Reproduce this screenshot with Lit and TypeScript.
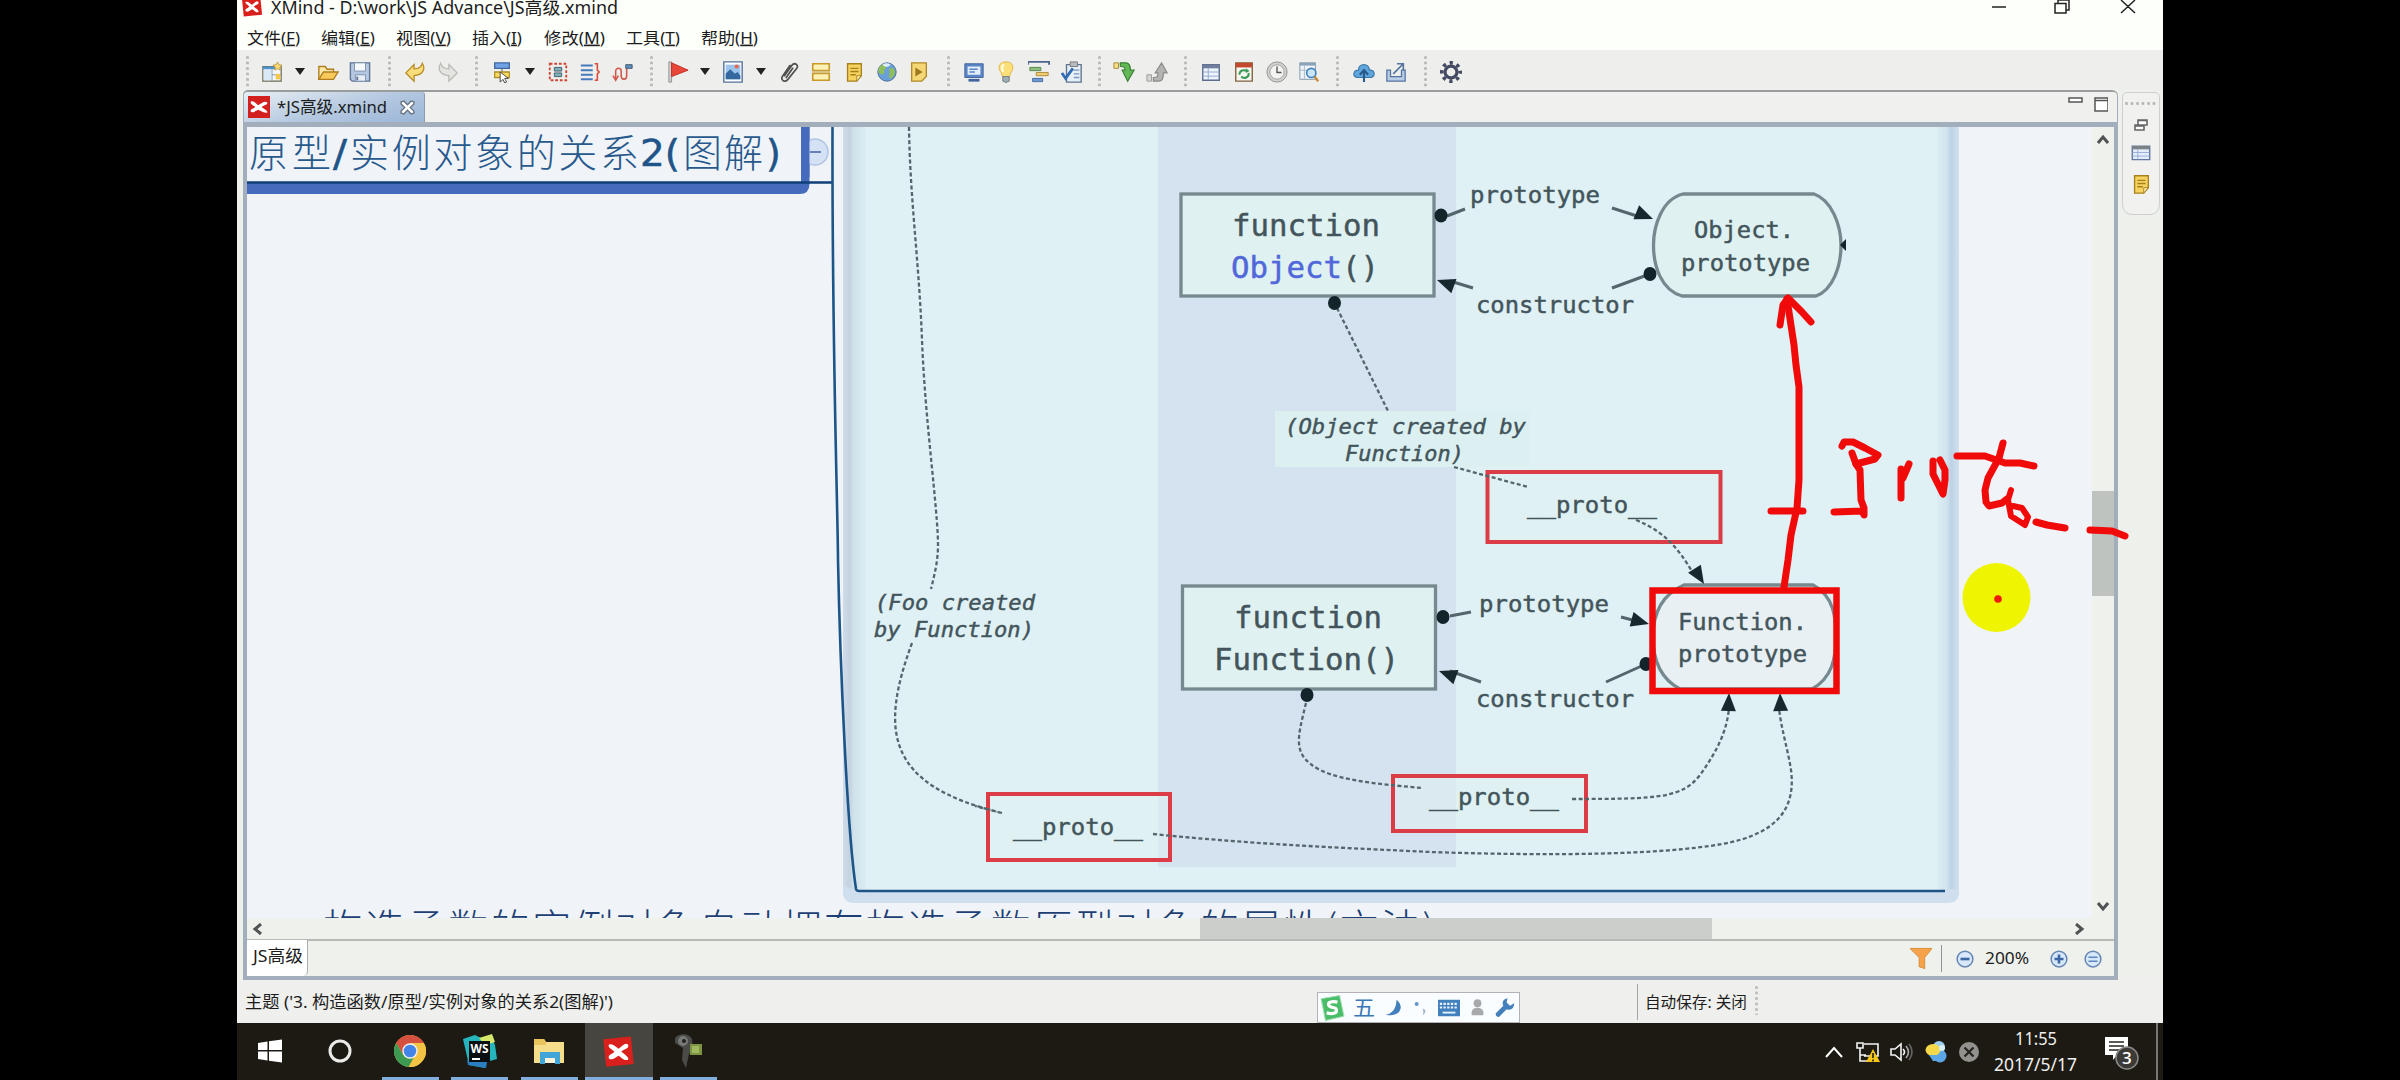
import { LitElement, html, svg, css, TemplateResult } from "lit";
import { customElement } from "lit/decorators.js";

const UI = '"Noto Sans", "Noto Sans CJK SC", sans-serif';

/** One line of text set to an exact width. */
const fit = (text: unknown, width: number, size: number, color = "#1c1c1c") => html`
  <svg width=${width} height=${Math.round(size * 1.5)} style="display:block;overflow:visible;flex:none">
    <text x="0" y=${size * 1.1} font-family=${UI} font-size=${size} fill=${color}
      textLength=${width} lengthAdjust="spacingAndGlyphs">${text}</text>
  </svg>`;

const ic = (body: unknown, w = 24, h = 24) =>
  html`<svg width=${w} height=${h} viewBox="0 0 24 24" fill="none" style="display:block;flex:none">${body}</svg>`;

const xlogo = svg`<path d="M1 3 21 1 23 21 3 23Z" fill="#d9201c"/>
  <path d="M5 7c3-1 4 1 7 3 3-2 5-5 7-3 1 3-3 3-5 5 2 2 6 4 5 6-3 1-5-2-7-3-2 1-5 4-7 2-1-3 3-3 4-5-2-2-5-3-4-5Z" fill="#fff"/>`;
const noteIcon = svg`<path d="M5 3h15v13l-5 6H5Z" fill="#f6d35f" stroke="#a8811f" stroke-width="1.5"/><path d="M8 8h9M8 11.500h9M8 15h6" stroke="#a8811f" stroke-width="1.500"/><path d="M20 16h-5v6Z" fill="#fff0b8" stroke="#a8811f"/>`;
const tableIcon = svg`<path d="M3 4h18v17H3Z" fill="#eef4fc" stroke="#5c6b8c" stroke-width="1.5"/><path d="M3 4h18v4H3Z" fill="#6f7f9d"/><path d="M3 12h18M3 16.500h18M9 8v13" stroke="#8fa6cb"/>`;

const ICONS: Record<string, TemplateResult<2>> = {
  create: svg`<path d="M2 6h20v16H2Z" fill="#f4f8fb" stroke="#6e6a50" stroke-width="1.300"/><path d="M2 6h14v3H2Z" fill="#4d94cf"/><path d="M12 9v13M12 15h10" stroke="#7d95aa"/><path d="M3 10h8v11H3Z" fill="#d9e9f5"/><path d="M16 14h5v6h-5Z" fill="#f5c84c"/><path d="M18 1l1.500 3 3.500.5-2.500 2.500.5 3-3-1.500-3 1.500.5-3L13 4.500 16.500 4Z" fill="#f8d978" stroke="#b08a30" stroke-width=".8"/>`,
  open: svg`<path d="M2 20V6h7l2 3h7v4" fill="#fbe7a6" stroke="#b07d1f" stroke-width="1.500"/><path d="M2 20 7 12h16l-5 8Z" fill="#f8c95b" stroke="#b07d1f" stroke-width="1.500"/>`,
  save: svg`<path d="M1.500 2h21v20h-19l-2-2Z" fill="#b4c8e2" stroke="#607497" stroke-width="1.500"/><path d="M6 2h12v9H6Z" fill="#f7fafc" stroke="#7a8dab"/><path d="M7 15h11v7H7Z" fill="#e8eef6" stroke="#7a8dab"/><path d="M9 17v4" stroke="#607497" stroke-width="2"/>`,
  undo: svg`<path d="M2 13 11 4v4.500c5 0 8-2 9-6 4 7 0 13-9 13.500V22Z" fill="#f9dc7b" stroke="#b88b23" stroke-width="1.400"/>`,
  redo: svg`<path d="M22 13 13 4v4.500c-5 0-8-2-9-6-4 7 0 13 9 13.500V22Z" fill="#e4e4e0" stroke="#b9b9b5" stroke-width="1.400"/>`,
  topic: svg`<path d="M4 2h16v6H4Z" fill="#6fa3e6" stroke="#41679f" stroke-width="1.400"/><path d="M12 8v4" stroke="#555"/><path d="M4 12h16v6H4Z" fill="#fadb62" stroke="#b0902a" stroke-width="1.400"/><path d="M10 12v11l3-3 2 4 2-1-2-4h4Z" fill="#fff" stroke="#444"/>`,
  boundary: svg`<path d="M3 3h18v18H3Z" stroke="#cf4332" stroke-width="2" stroke-dasharray="3 2"/><path d="M8 7h8v4H8ZM8 13h8v4H8Z" fill="#7fb0b8" stroke="#3f5a6e"/>`,
  summary: svg`<path d="M2 5h13M2 10h13M2 15h13M2 20h13" stroke="#4779bd" stroke-width="2.200"/><path d="M17 3h3v7l2 2-2 2v7h-3" stroke="#d8503f" stroke-width="1.800"/>`,
  relation: svg`<path d="M4 20V11c0-4 6-4 6 0v5c0 5 6 5 6 0V8" stroke="#d0584a" stroke-width="1.700"/><path d="m1 16 3 5 3-5" stroke="#d0584a" stroke-width="1.700"/><path d="M15 4h7v4h-7Z" fill="#5c90c4" stroke="#456"/>`,
  flag: svg`<path d="M2 1h3v22H2Z" fill="#cfd2d2" stroke="#8e8e8e"/><path d="M5 2 23 10 5 17Z" fill="#e8483a" stroke="#c2281f"/>`,
  image: svg`<path d="M2 1h20v22H2Z" fill="#fff" stroke="#52719b" stroke-width="1.500"/><path d="M4 4h16v16H4Z" fill="#9cc4ec"/><path d="m4 20 0-6 5-5 5 5 3-2 3 4v4Z" fill="#34699f"/><circle cx="16" cy="6" r="2.300" fill="#e46850"/>`,
  clip: svg`<path d="m7 16 8-11c3-4 8-1 5.500 3L11 20c-3 4-9 1-6-3.500L13 5M9 18l7-10" stroke="#515151" stroke-width="1.900" stroke-linecap="round"/>`,
  label: svg`<path d="M3 3h18v7.500H3ZM3 13.500h18V21H3Z" fill="#fdf0b5" stroke="#c79a2a" stroke-width="1.800"/>`,
  note: noteIcon,
  globe: svg`<circle cx="12" cy="12" r="10" fill="#6a9fd9" stroke="#4a6c94"/><path d="M5 5c5-3 7-1 6 2s-3 2-2 5-3 3-6 1c-1-4 0-6 2-8ZM14 9c4-3 6-1 7 3-1 4-3 7-6 7-2-4 1-5-1-10Z" fill="#8fbf5c"/><path d="M7 4c3-2 6-2 9 0-3 3-6 3-9 0Z" fill="#dbeefa"/>`,
  audio: svg`<path d="M4 2h16v15l-5 5H4Z" fill="#f6d775" stroke="#b08a2b" stroke-width="1.500"/><path d="m8 7 8 5-8 5Z" fill="#a07820"/>`,
  present: svg`<path d="M2 3h20v15H2Z" fill="#5a85c6" stroke="#40639b"/><path d="M5 6h14v9H5Z" fill="#e3eefb"/><path d="M7 9h9M7 12h6" stroke="#5a85c6" stroke-width="1.500"/><path d="M6 21h12" stroke="#40639b" stroke-width="3"/>`,
  bulb: svg`<path d="M12 1c9 0 9 8 5 12l-1 4H8l-1-4C3 9 3 1 12 1Z" fill="#fbe07a" stroke="#e0b23c"/><path d="M10 4c-3 1-3 5-1 8" stroke="#fffbe2" stroke-width="2.500"/><path d="M8.500 17h7v5l-3.500 1.500L8.500 22Z" fill="#9fb0b5" stroke="#6d7c80"/>`,
  gantt: svg`<path d="M0 4V1h23v3" stroke="#4a678f" stroke-width="2"/><path d="M2 7h12v3.500H2Z" fill="#8cc07f" stroke="#56804c"/><path d="M9 12.500h13V16H9Z" fill="#f1cf6e" stroke="#a8873a"/><path d="M5 19h11v3.500H5Z" fill="#6c9ad6" stroke="#46699b"/>`,
  task: svg`<path d="M6 4h16v19H6Z" fill="#e7eff8" stroke="#5f7691" stroke-width="1.500"/><path d="M10 1h8v5h-8Z" fill="#b7bcc0" stroke="#777"/><path d="M14 10h6M14 14h6M14 18h6" stroke="#7898bf" stroke-width="1.500"/><path d="m1 13 4 6 8-11" stroke="#2f6cb4" stroke-width="3"/>`,
  import: svg`<path d="M1 2h5v6H1Z" fill="#f7df84" stroke="#a08839"/><path d="M8 2h6c4 0 5 3 5 8h4l-7 12-6-12h3c0-3 0-4-5-4Z" fill="#64b957" stroke="#3c8135" stroke-width="1.300"/>`,
  export: svg`<path d="M1 15h5v7H1Z" fill="#d6d6d2" stroke="#999"/><path d="M8 22h6c4 0 5-3 5-9h4L17 2l-7 11h3c0 4 0 5-5 5Z" fill="#b4b5b2" stroke="#8a8b88" stroke-width="1.300"/>`,
  table: tableIcon,
  blog: svg`<path d="M3 2h18v20H3Z" fill="#f7f7ef" stroke="#80613e" stroke-width="1.500"/><path d="M3 2h18v5H3Z" fill="#c4482e"/><path d="M7 15c0-5 5-6 8-4M17 13c1 5-5 7-8 4" stroke="#3b9a59" stroke-width="2.200"/><path d="m14 8 4 3-4 2Z" fill="#3b9a59"/>`,
  clock: svg`<circle cx="12" cy="12" r="11" fill="#cfd1cf" stroke="#8f918f"/><circle cx="12" cy="12" r="7.800" fill="#f4f4f0" stroke="#a0a2a0"/><path d="M12 6v6.500h5" stroke="#555" stroke-width="1.500"/>`,
  search: svg`<path d="M2 2h17v18H2Z" fill="#eff4f8" stroke="#8095a8"/><path d="M2 2h17v3H2Z" fill="#8ba3b8"/><path d="M2 10h17M7 5v15" stroke="#a9b9c6"/><circle cx="14.500" cy="13" r="5" fill="#c9e5f7" stroke="#4183bd" stroke-width="1.800"/><path d="m18 17 4 5" stroke="#c58835" stroke-width="2.500"/>`,
  cloud: svg`<path d="M5 18c-6-1-5-8 1-8 0-8 11-8 12 0 6-1 7 7 1 8Z" fill="#5fa6dc" stroke="#3a78ab" stroke-width="1.300"/><path d="M12 23V12M7.500 15 12 10l4.500 5" stroke="#28578a" stroke-width="2.300"/>`,
  share: svg`<path d="M2 10v12h20V10h-4v7H6v-7Z" fill="#b8cde6" stroke="#54749f" stroke-width="1.400"/><path d="m9 14 11-11M13 3h7v7" stroke="#54749f" stroke-width="1.800"/>`,
  gear: svg`<circle cx="12" cy="12" r="6.500" stroke="#454a63" stroke-width="3.500"/><circle cx="12" cy="12" r="10" stroke="#454a63" stroke-width="4" stroke-dasharray="3.600 4.254" stroke-dashoffset="1.800"/>`,
};

const TOOLBAR: string[] = [
  "create", "▾", "open", "save", "|", "undo", "redo", "|", "topic", "▾", "boundary", "summary", "relation", "|",
  "flag", "▾", "image", "▾", "clip", "label", "note", "globe", "audio", "|", "present", "bulb", "gantt", "task", "!",
  "import", "export", "|", "table", "blog", "clock", "search", "|", "cloud", "share", "|", "gear",
];

const MENU: [string, string, number, number][] = [
  ["文件", "F", 53, 74], ["编辑", "E", 54, 75], ["视图", "V", 55, 76], ["插入", "I", 50, 71.5],
  ["修改", "M", 61, 82], ["工具", "T", 54, 75], ["帮助", "H", 57, 75],
];

@customElement("xm-toolbar")
class XmToolbar extends LitElement {
  static styles = css`
    :host { display: flex; height: 40px; align-items: center; background: #eeefec; padding: 3px 0 0 9px; box-sizing: border-box; }
    .cell { width: 32.6px; display: flex; justify-content: center; }
    .drop { width: 23px; display: flex; justify-content: center; }
    .drop i { border: 5.500px solid transparent; border-top: 7px solid #222; border-bottom: 0; }
    .sep { height: 31px; width: 3px; margin: 0 8px 0 11px; background: radial-gradient(circle at 1.500px 1.500px, #b9bbb8 1.300px, transparent 1.600px) 0 0 / 3px 5.500px; }
    .tight { margin: 0 7px 0 10px; }
    .first { margin: 0 7px 0 0; }
  `;
  render() {
    return html`<span class="sep first"></span>${TOOLBAR.map((k) =>
      k === "|" || k === "!"
        ? html`<span class="sep ${k === "!" ? "tight" : ""}"></span>`
        : k === "▾"
          ? html`<span class="drop"><i></i></span>`
          : html`<span class="cell">${ic(ICONS[k], 22, 22)}</span>`)}`;
  }
}

const mono = '"DejaVu Sans Mono", monospace';
const label = (s: unknown, x: number, y: number, w: number, size: number, extra = "", fill = "#43555b") => svg`
  <text class="mono" x=${x} y=${y} font-family=${mono} font-size=${size} fill=${fill} font-style=${extra || "normal"}
    textLength=${w} lengthAdjust="spacingAndGlyphs">${s}</text>`;
const proto = (x: number, y: number, w = 130) => svg`${label("__proto__", x, y, w, 23.5)}`;
const head = (x: number, y: number, angle: number) =>
  svg`<path d="M0 0-18-7.500V7.500Z" fill="#18282f" transform="translate(${x} ${y}) rotate(${angle})"/>`;
const dot = (x: number, y: number) => svg`<ellipse cx=${x} cy=${y} rx="6.500" ry="7" fill="#14242b"/>`;

@customElement("xm-map")
class XmMap extends LitElement {
  static styles = css`
    :host { display: block; width: 1845px; height: 791px; background: #f0f4f8; overflow: hidden; }
    svg { display: block; }
    .cjk { font-family: "Noto Sans CJK SC", sans-serif; font-weight: 300; font-size: 39px; fill: #28598c; }
    .latin { font-family: "DejaVu Sans", sans-serif; font-size: 38px; fill: #205489; stroke: #205489; stroke-width: .5; }
    .next { font-family: "Noto Sans CJK SC", sans-serif; font-weight: 300; font-size: 40px; fill: #1d3f73; }
    .mono { stroke: #43555b; stroke-width: .45; }
    .mono tspan { stroke: #5068da; }
    .dash { fill: none; stroke: #53666c; stroke-width: 2.300; stroke-dasharray: 4 2.500; }
    .line { fill: none; stroke: #53666c; stroke-width: 3; }
    .box { fill: #e0f1f1; stroke: #76898f; stroke-width: 3.300; }
    .red { fill: #e0f2f0; fill-opacity: .5; stroke: #dc3c45; stroke-width: 4; }
  `;
  render() {
    return html`<svg width="1845" height="791" viewBox="247 127 1845 791">
      <defs>
        <linearGradient id="left"><stop offset="0" stop-color="#cfdbe8"/><stop offset=".3" stop-color="#c4d2e0"/><stop offset=".45" stop-color="#cfe1ea"/><stop offset="1" stop-color="#dbeef2"/></linearGradient>
        <linearGradient id="right"><stop offset="0" stop-color="#dbeef3"/><stop offset=".4" stop-color="#d2e5ee"/><stop offset=".65" stop-color="#bed2e6"/><stop offset="1" stop-color="#d3e0ee"/></linearGradient>
        <linearGradient id="foot" x2="0" y2="1"><stop offset="0" stop-color="#bed1e5"/><stop offset="1" stop-color="#d0dfee"/></linearGradient>
      </defs>
      <path d="M801 127h8.500V184q0 10-10 10H247V183H801Z" fill="#466abc"/>
      <path d="M247 182.500H833" stroke="#0f3f78" stroke-width="2.500"/>
      <circle cx="815" cy="152" r="13" fill="#d5e2f6" stroke="#b3c5e3" stroke-width="1.500"/>
      <path d="M801 127h8.500v50H801Z" fill="#466abc"/>
      <path d="M810 152h11" stroke="#6680b5" stroke-width="2"/>
      <text class="cjk" x="249" y="167" textLength="82">原型</text>
      <text class="latin" x="333" y="166" textLength="14" lengthAdjust="spacingAndGlyphs">/</text>
      <text class="cjk" x="350" y="167" textLength="289">实例对象的关系</text>
      <text class="latin" x="640" y="166" textLength="40" lengthAdjust="spacingAndGlyphs">2(</text>
      <text class="cjk" x="683" y="167" textLength="80">图解</text>
      <text class="latin" x="766" y="166">)</text>

      <path d="M843 127H1959V892q0 11-11 11H854q-11 0-11-11Z" fill="url(#foot)"/>
      <path d="M865 127H1940V891H865Z" fill="#dff1f4"/>
      <path d="M843 127h23v763h-12l-11-5Z" fill="url(#left)"/>
      <path d="M1937 127h22v762h-22Z" fill="url(#right)"/>
      <path d="M1158 127h298v740h-298Z" fill="#d5e3f0"/>
      <path d="M832.500 127C832 350 838 520 838 560 840 660 847 830 856 889q.5 2 3 2H1945" fill="none" stroke="#1d5588" stroke-width="2.600"/>

      <g class="dash">
        <path d="M909 127C910 200 919 260 922 340 925 420 938 510 938 545 938 560 935 573 931 589"/>
        <path d="M912 643C880 730 885 785 1002 813"/>
        <path d="M1337 308 1388 411"/>
      </g>
      <path d="M1275 411H1530V467H1275Z" fill="#ddf0f1"/>
      <g class="line">
        <rect class="box" x="1181" y="194" width="253" height="102"/>
        <rect class="box" x="1182.500" y="586" width="253" height="103"/>
        <path d="M1447 216 1465 209M1612 208 1640 217M1473 288 1450 281M1650 274 1612 288"/>
        <path d="M1450 616 1471 612M1621 617 1640 622M1481 682 1450 671M1646 664 1606 682"/>
        <path class="box" d="M1683 194H1814C1832 200 1841 226 1841 245 1841 266 1833 290 1816 296H1682C1661 290 1653.500 266 1653.500 245 1653.500 226 1662 199 1683 194Z"/>
        <path class="box" d="M1684 585H1813C1834 596 1836 618 1836 637 1836 658 1832 678 1812 689H1680C1659 678 1653 658 1653 637 1653 618 1659 596 1684 585Z" style="fill:#e8f0f4"/>
      </g>
      <rect class="red" x="1487.500" y="472" width="233" height="70"/>
      <rect class="red" x="988" y="794" width="182" height="66"/>
      <rect class="red" x="1393" y="776" width="193" height="55"/>
      <g class="dash">
        <path d="M1454 467 1528 487"/>
        <path d="M1002 813 975 806"/>
        <path d="M1636 520C1665 532 1678 548 1693 573"/>
        <path d="M1306 703C1297 740 1292 755 1320 770 1345 782 1390 785 1422 788"/>
        <path d="M1572 799C1660 799 1682 798 1700 775 1718 750 1727 730 1729 708"/>
        <path d="M1153 834C1260 845 1350 848 1430 852 1550 856 1660 855 1722 844 1778 834 1796 808 1791 770 1788 750 1781 728 1779 708"/>
      </g>
      ${head(1653, 219, 22)}${head(1437, 280, 200)}${head(1649, 624, 15)}${head(1439, 671, 200)}
      ${head(1704, 584, 58)}${head(1729, 693, -88)}${head(1780, 693, -92)}
      ${dot(1441, 215.5)}${dot(1650, 274)}${dot(1334.500, 303)}${dot(1443, 617)}${dot(1646, 664)}${dot(1307, 695)}
      <path d="M1846 239v12l-6-6Z" fill="#14242b"/>
      ${label("function", 1232, 236, 148, 29.5)}
      ${label(svg`<tspan fill="#5068da">Object</tspan>()`, 1231, 277.5, 148, 29.5)}
      ${label("function", 1234, 628, 148, 29.5)}
      ${label("Function()", 1214, 669.5, 185, 29.5)}
      ${label("prototype", 1470, 203, 130, 23)}
      ${label("constructor", 1476, 313, 158, 23)}
      ${label("prototype", 1479, 612, 130, 23)}
      ${label("constructor", 1476, 707, 158, 23)}
      ${label("Object.", 1694, 238, 100, 23)}
      ${label("prototype", 1681, 270.5, 129, 23)}
      ${label("Function.", 1678, 630, 129, 23)}
      ${label("prototype", 1678, 662, 129, 23)}
      ${label("(Object created by", 1285, 434, 241, 21.5, "italic")}
      ${label("Function)", 1345, 461, 119, 21.500, "italic")}
      ${label("(Foo created", 875, 610, 160, 21.500, "italic")}
      ${label("by Function)", 874, 637, 160, 21.500, "italic")}
      ${proto(1527, 513)}${proto(1013, 835)}${proto(1429, 804.500)}
      <text class="next" x="323" y="943" textLength="1112">构造函数的实例对象自动拥有构造函数原型对象的属性(方法)</text>
    </svg>`;
  }
}

@customElement("xm-ink")
class XmInk extends LitElement {
  static styles = css`
    :host { position: absolute; left: 0; top: 0; pointer-events: none; }
    .ink { fill: none; stroke: #f00a0a; stroke-width: 7; stroke-linecap: round; stroke-linejoin: round; }
    .frame { fill: none; stroke: #f00a0a; stroke-width: 6.500; }
  `;
  render() {
    return html`<svg width="2400" height="1080" style="display:block">
      <ellipse cx="1996.500" cy="597.500" rx="34" ry="34.500" fill="#eff400"/>
      <circle cx="1998" cy="599" r="3.800" fill="#f01a0a"/>
      <rect class="frame" x="1652.500" y="590.500" width="184" height="100.500"/>
      <g class="ink">
        <path d="M1787 299 1794 345 1796 365 1799 387V480L1797 508 1791 535 1788 560 1784 587"/>
        <path d="M1780 325 1783 305 1788 298 1802 312 1811 322"/>
        <path d="M1771 511H1803"/>
        <path d="M1842 446 1844 442 1853 442 1865 448 1878 455 1875 459 1856 464 1852 453"/>
        <path d="M1856 464 1860 470 1861 500 1864 508 1864 515 1862 511 1834 512"/>
        <path d="M1901 469 1901 498M1909 464 1903 478"/>
        <path d="M1933 461V474L1943 494 1945 480V470L1940 460"/>
        <path d="M1957 456 1985 456 2005 463 2020 463 2034 466"/>
        <path d="M2003 443 1999 458 1988 478 1985 490 1986 502 1989 506 2002 503 2007 499" />
        <path d="M2011 490 2008 500 2011 516 2025 525M2013 506 2022 508 2028 517 2025 525" stroke-width="6"/>
        <path d="M2036 522 2047 525 2065 528M2090 530 2112 531 2125 536"/>
      </g>
    </svg>`;
  }
}

@customElement("app-root")
class AppRoot extends LitElement {
  static styles = css`
    :host { display: block; }
    .screen { position: relative; width: 2400px; height: 1080px; box-sizing: border-box; padding: 0 237px; background: #000; overflow: hidden; }
    .window { width: 1926px; height: 1080px; display: flex; flex-direction: column; background: #eef0ec; overflow: hidden; }
    .title { height: 22px; flex: none; display: flex; background: #fdfffb; padding-left: 3px; }
    .title .logo { margin: -5px 8px 0 1px; }
    .title .name { margin-top: -5px; flex: 1; }
    .menu { height: 28px; flex: none; display: flex; background: #fdfffb; padding: 4px 0 0 10px; box-sizing: border-box; }
    .menu span { flex: none; }
    .main { height: 890px; flex: none; display: flex; padding-left: 6px; }
    .frame { width: 1875px; height: 890px; box-sizing: border-box; border: 0 solid #999d9d; border-top-width: 2px; border-radius: 5px 6px 0 0; background: #a2aebb; display: flex; flex-direction: column; }
    .tabs { height: 30px; margin: 0 1px; background: #f0f1ee; display: flex; border-radius: 4px 4px 0 0; }
    .tab { width: 181px; display: flex; align-items: center; box-sizing: border-box; padding-left: 4px; background: linear-gradient(165deg, #e4ecf3 5%, #b4c8e0 55%, #9bb6d8); border-right: 1px solid #8c9bab; border-radius: 4px 3px 0 0; }
    .tab .x { margin-left: 12px; }
    .tab .nm { margin-left: 7px; }
    .tabs .mm { margin-left: auto; display: flex; gap: 12px; padding: 5px 9px 0 0; }
    .body { margin: 5px 4px 4px; flex: 1; background: #eef1ec; display: flex; flex-direction: column; }
    .row { display: flex; height: 791px; }
    .vscroll { width: 22px; display: flex; flex-direction: column; align-items: center; padding: 7px 0 6px; box-sizing: border-box; }
    .vthumb { width: 22px; height: 105px; background: #bfc3bf; margin-top: 347px; }
    .down { margin-top: auto; }
    .hscroll { height: 23px; display: flex; align-items: center; padding: 0 29px 0 5px; border-bottom: 2px solid #b6bab7; box-sizing: border-box; }
    .hthumb { width: 512px; height: 21px; background: #cbcecb; margin-left: 938px; }
    .right { margin-left: auto; }
    .sheets { flex: 1; display: flex; align-items: center; }
    .sheet { width: 61px; height: 36px; margin-top: -2px; background: #fff; border-right: 1.500px solid #aaafad; border-radius: 0 0 5px 0; box-sizing: border-box; padding: 4px 0 0 6px; }
    .zoom { margin-left: auto; display: flex; align-items: center; padding-right: 12px; }
    .bar { width: 1.500px; height: 27px; background: #8d9294; margin: 0 14px 0 9px; }
    .pct { margin: 0 21px 0 11px; }
    .eq { margin-left: 16px; }
    .side { width: 38px; height: 123px; box-sizing: border-box; margin: 2px 0 0 4px; border: 1.500px solid #cdd0cc; border-radius: 5px 5px 10px 10px; background: #f1f2ef; display: flex; flex-direction: column; align-items: center; gap: 11px; }
    .dots { width: 32px; height: 3px; margin: 9px 0 0; background: radial-gradient(circle at 1.500px 1.500px, #b6b9b6 1.300px, transparent 1.600px) 0 0 / 5.500px 3px; }
    .status { height: 43px; flex: none; display: flex; padding: 0 0 0 8px; background: #eff0ed; }
    .status .left { width: 1071.500px; padding-top: 10px; box-sizing: border-box; }
    .ime { width: 203px; height: 31px; box-sizing: border-box; margin-top: 12px; border: 1.500px solid #b3b0b8; background: #fafdff; display: flex; align-items: center; justify-content: space-between; padding: 0 4px 0 1px; }
    .auto { margin: 4px 0 0 117px; height: 36px; border-left: 1.500px solid #a1a5a4; padding: 7px 0 0 7px; box-sizing: border-box; display: flex; gap: 8px; }
    .auto i { width: 3px; height: 29px; margin-top: -5px; background: radial-gradient(circle at 1.500px 1.500px, #bbbebb 1.300px, transparent 1.600px) 0 0 / 3px 5.500px; }
    .task { height: 57px; flex: none; display: flex; background: #1d1a14; color: #fff; }
    .app { width: 68px; height: 57px; display: flex; align-items: center; justify-content: center; box-sizing: border-box; margin-right: 1.600px; padding: 0 0 1px; }
    .start { margin-left: -1px; }
    .gap { margin-left: 1px; }
    .run { background: linear-gradient(#82aedd, #82aedd) 50% 100% / 57px 3px no-repeat; }
    .on { background: linear-gradient(#82aedd, #82aedd) 0 100% / 68px 3px no-repeat, #46453f; }
    .tray { margin-left: auto; display: flex; align-items: center; }
    .tray > * { flex: none; }
    .clock { width: 83px; display: flex; flex-direction: column; align-items: center; gap: 0; margin: 0 26px 0 15px; }
    .peek { width: 2px; height: 57px; background: #77756f; margin: 0 5px 0 17px; }
  `;

  render() {
    const ring = (inner: unknown) => ic(svg`<circle cx="12" cy="12" r="10.500" fill="#d6e8f9" stroke="#6886b4" stroke-width="2"/>${inner}`, 18, 18);
    return html`<div class="screen">
      <div class="window">
        <div class="title">
          <div class="logo">${ic(xlogo, 22, 23)}</div>
          <div class="name">${fit("XMind - D:\\work\\JS Advance\\JS高级.xmind", 347, 17.500)}</div>
          <svg width="150" height="20" style="display:block;margin-right:22px;overflow:visible" fill="none" stroke="#222" stroke-width="1.500">
            <path d="M1 7h14M64 3.500h11v9.500H64ZM67 3V0h11v10h-3M130 0l14 13M144 0 130 13"/>
          </svg>
        </div>
        <div class="menu">${MENU.map(([t, k, w, cell]) =>
          html`<span style="width:${cell}px">${fit(svg`${t}(<tspan text-decoration="underline">${k}</tspan>)`, w, 16)}</span>`)}</div>
        <xm-toolbar></xm-toolbar>
        <div class="main">
          <div class="frame">
            <div class="tabs">
              <div class="tab">${ic(svg`<path d="M0 0h24v24H0Z" fill="#d3201f"/><path d="M3 6c4-1 5 2 8 4 4-2 7-5 10-3 1 3-4 3-6 5 2 2 7 4 6 6-4 1-7-2-10-3-2 1-6 4-8 2-1-3 3-3 5-5-3-2-6-4-5-6Z" fill="#fff"/>`, 22, 22)}
                <span class="nm">${fit("*JS高级.xmind", 110, 17)}</span>
                <span class="x">${ic(svg`<path d="m3 4 4-1 5 5 5-5 4 1v3l-5 5 5 5v3l-4 1-5-5-5 5-4-1v-3l5-5-5-5Z" fill="#fff" stroke="#6b7784" stroke-width="2"/>`, 17, 17)}</span></div>
              <div class="mm"><svg width="40" height="18" fill="#fff" stroke="#555" stroke-width="1.500"><path d="M1 1h13v4H1ZM27 1h13v13H27ZM27 3.500h13"/></svg></div>
            </div>
            <div class="body">
              <div class="row"><xm-map></xm-map>
                <div class="vscroll">
                  <svg width="12" height="10" fill="none" stroke="#4f5353" stroke-width="3"><path d="m1 9 5-6 5 6"/></svg>
                  <div class="vthumb"></div>
                  <svg class="down" width="12" height="10" fill="none" stroke="#4f5353" stroke-width="3"><path d="m1 1 5 6 5-6"/></svg>
                </div></div>
              <div class="hscroll">
                <svg width="10" height="12" fill="none" stroke="#4f5353" stroke-width="3"><path d="M9 1 3 6l6 5"/></svg>
                <div class="hthumb"></div>
                <svg class="right" width="10" height="12" fill="none" stroke="#4f5353" stroke-width="3"><path d="m1 1 6 5-6 5"/></svg>
              </div>
              <div class="sheets">
                <div class="sheet">${fit("JS高级", 50, 16.500)}</div>
                <div class="zoom">
                  ${ic(svg`<path d="M0 1h24l-8 10v12l-6-2V11Z" fill="#f5a24b" stroke="#d88a35"/>`, 22, 23)}
                  <span class="bar"></span>
                  ${ring(svg`<path d="M6 12h12" stroke="#3c67a4" stroke-width="3.500"/>`)}
                  <span class="pct">${fit("200%", 44, 16.500)}</span>
                  ${ring(svg`<path d="M6 12h12M12 6v12" stroke="#3c67a4" stroke-width="3.500"/>`)}
                  <span class="eq">${ring(svg`<path d="M6 9.500h12M6 15h12" stroke="#5b86bd" stroke-width="2"/>`)}</span>
                </div>
              </div>
            </div>
          </div>
          <div class="side">
            <span class="dots"></span>
            <svg width="14" height="14" style="margin-top:2px" fill="#fff" stroke="#666" stroke-width="1.600"><path d="M4 2h9v5H4ZM1 7h9v5H1ZM1 8h9M4 2.500h9"/></svg>
            ${ic(svg`<path d="M1 4h22v17H1Z" fill="#e4eefb" stroke="#66779c" stroke-width="1.800"/><path d="M1 4h22v4H1Z" fill="#7c8285"/><path d="M1 12h22M1 16.500h22M8 8v13" stroke="#8aa3d0"/>`, 20, 19)}
            ${ic(noteIcon, 22, 22)}
          </div>
        </div>
        <div class="status">
          <div class="left">${fit("主题 ('3. 构造函数/原型/实例对象的关系2(图解)')", 368, 16.500)}</div>
          <div class="ime">
            ${ic(svg`<path d="m2 4 17-3 4 19-17 4Z" fill="#49bd68" stroke="#9fdcae"/><path d="M17 7c-5-1-9 0-8 3s8 1 7 5c0 3-5 3-9 2" stroke="#fff" stroke-width="3"/>`, 26, 27)}
            ${fit("五", 22, 21, "#3b78b5")}
            ${ic(svg`<path d="M15 2c11 9 3 22-13 18 8-1 13-8 13-18Z" fill="#4180bd"/>`, 20, 22)}
            ${ic(svg`<circle cx="7" cy="6" r="3" fill="#6397ca"/><path d="M16 13c6 1 5 6 0 10 2-4 1-6 0-10Z" fill="#9eb4c8"/>`, 16, 18)}
            ${ic(svg`<path d="M0 3h24v18H0Z" fill="#4180bd"/><path d="M2 7.500h20M2 11.500h20" stroke="#e7f3ff" stroke-width="2.200" stroke-dasharray="2.500 1.500"/><path d="M5 17h14" stroke="#e7f3ff" stroke-width="2"/>`, 24, 22)}
            ${ic(svg`<circle cx="12" cy="6" r="5.500" fill="#a7a9aa"/><path d="M4 23c-4-14 20-14 16 0Z" fill="#a7a9aa"/>`, 17, 19)}
            ${ic(svg`<path d="M15 1c-5 1-7 5-5 9L1 19c-1 3 2 5 4 4l9-9c5 2 9-1 9-7l-5 3-4-4Z" fill="#4480bb"/>`, 20, 21)}
          </div>
          <div class="auto">${fit("自动保存: 关闭", 102, 15.500)}<i></i></div>
        </div>
        <div class="task">
          <div class="app start">${ic(svg`<path d="M0 4 9.500 2.500V11H0ZM11 2.300 24 .5V11H11ZM0 12.500h9.500V21.500L0 20ZM11 12.500H24V23.500L11 21.700Z" fill="#fff"/>`, 24, 24)}</div>
          <div class="app">${ic(svg`<circle cx="12" cy="12" r="10" stroke="#ecebe8" stroke-width="3"/>`, 24, 24)}</div>
          <div class="app run gap">${ic(svg`<circle cx="12" cy="12" r="12" fill="#e1bd3e"/><path d="M1.600 6A12 12 0 0 1 22.400 6H12L7 15Z" fill="#d5503f"/><path d="M1.600 6A12 12 0 0 0 11 24l5-9H7Z" fill="#3d9a52"/><path d="M22.400 6H12l4 9-5 9A12 12 0 0 0 22.400 6Z" fill="#f3c443"/><circle cx="12" cy="12" r="5.800" fill="#f4f0e8"/><circle cx="12" cy="12" r="4.700" fill="#4384e8"/>`, 32, 32)}</div>
          <div class="app run"><svg width="35" height="35" viewBox="0 0 35 35"><path d="m1 5 12-4 6 3 10-3 4 10 2 14-11 3-1 6L7 31Z" fill="#25b5bd"/><path d="m17 4 13-4 3 8-10 3Z" fill="#d5e86a"/><path d="m5 26 20 2-1 6L6 31Z" fill="#2a7fc0"/><path d="M7 7h21v21H7Z" fill="#0b0f11"/><text x="8.500" y="19" font-family="Open Sans, sans-serif" font-weight="700" font-size="13" fill="#fff" textLength="18" lengthAdjust="spacingAndGlyphs">WS</text><path d="M10 25h8" stroke="#fff" stroke-width="2"/></svg></div>
          <div class="app run"><svg width="32" height="30" viewBox="0 0 32 30"><path d="M1 3h10l2 3h18v21H1Z" fill="#f6dd8b"/><path d="M1 3h10l2 3v3H1Z" fill="#e9c45c"/><path d="M7 28V16h20v12h-5v-6H12v6Z" fill="#42a5d8"/><path d="M12 22h10v5H12Z" fill="#f9f2d8"/></svg></div>
          <div class="app on">${ic(xlogo, 33, 33)}</div>
          <div class="app run"><svg width="30" height="34" viewBox="0 0 30 34"><path d="M1 4C5-1 15-1 18 5l1 9-4 6-3 14-4-8 1-12-8-5Z" fill="#4a4b49"/><circle cx="9" cy="7" r="5" fill="#777977"/><circle cx="10" cy="7" r="2" fill="#222"/><path d="M16 10h12v11H16Z" fill="#7d9441"/><path d="M18 12h7v7h-7Z" fill="#a1b862"/></svg></div>
          <div class="tray">
            <svg width="18" height="12" fill="none" stroke="#fff" stroke-width="2"><path d="m1 11 8-9 8 9"/></svg>
            <svg width="24" height="22" style="margin-left:13px" fill="none" stroke="#f4f4f4" stroke-width="1.600"><path d="M8 3h14v12H8M1 2h6v5H1ZM4 7v13h8M4 14h6"/><path d="m17 8 7 13H10Z" fill="#f5c518" stroke="none"/><path d="M17 12v5M17 18.500v2" stroke="#332" stroke-width="1.800"/></svg>
            <svg width="24" height="20" style="margin-left:10px" fill="none" stroke="#f4f4f4" stroke-width="1.600"><path d="M1 7h4l6-5v16l-6-5H1ZM13 7q3 3 0 6"/><path d="M16 4q5 6 0 12" stroke="#aaa"/><path d="M19 2q6 8 0 16" stroke="#666"/></svg>
            <svg width="24" height="24" style="margin-left:10px"><circle cx="15" cy="7" r="6" fill="#9ed0ee"/><circle cx="16" cy="16" r="6.500" fill="#5ba6e6"/><ellipse cx="9" cy="10" rx="7.500" ry="6" fill="#f6d94b"/><path d="M5 15h12v6H9Z" fill="#5ba6e6"/><circle cx="18" cy="8" r="3" fill="#d9eff5"/></svg>
            <svg width="20" height="20" style="margin-left:11px"><circle cx="10" cy="10" r="10" fill="#92918e"/><path d="m5.500 5.500 9 9M14.500 5.500l-9 9" stroke="#26231d" stroke-width="2.200"/></svg>
            <div class="clock">${fit("11:55", 42, 17.500, "#efefed")}${fit("2017/5/17", 83, 17.500, "#efefed")}</div>
            <svg width="36" height="38"><path d="M2 4h23v18H14l-4 5v-5H2Z" fill="#fff"/><path d="M6 9h15M6 13h15M6 17h11" stroke="#26231d" stroke-width="1.600"/><circle cx="24" cy="25" r="11" fill="#3c3a36" stroke="#8a8985" stroke-width="1.500"/><text x="19" y="31" font-family="Open Sans, sans-serif" font-weight="600" font-size="17" fill="#fff">3</text></svg>
            <span class="peek"></span>
          </div>
        </div>
      </div>
      <xm-ink></xm-ink>
    </div>`;
  }
}
